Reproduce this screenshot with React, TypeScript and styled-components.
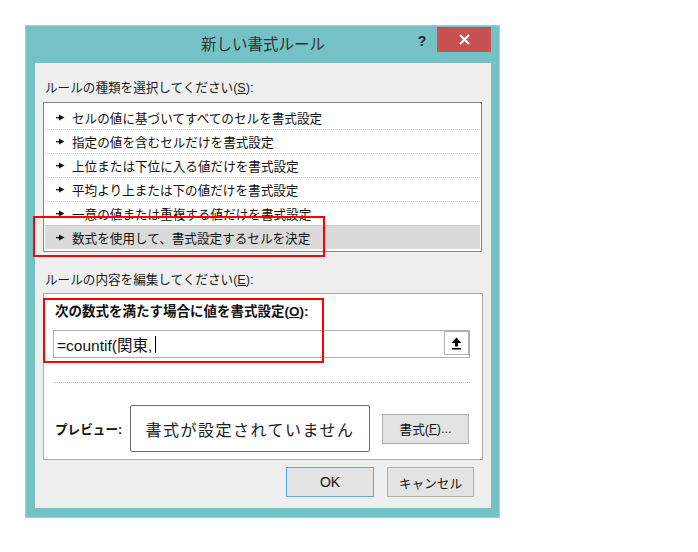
import styled, { createGlobalStyle } from 'styled-components';

const GlobalStyle = createGlobalStyle`
  body {
    margin: 0;
    background: #ffffff;
    font-family: "Liberation Sans", "Noto Sans CJK JP", sans-serif;
    color: #1b1b1b;
  }
`;

const Page = styled.div`
  position: relative;
  width: 698px;
  height: 552px;
  overflow: hidden;
  background: #ffffff;
`;

const Dialog = styled.div`
  margin: 25px 0 0 25px;
  width: 475px;
  box-sizing: border-box;
  border: 1px solid #c4c4c4;
  background: #74c2c6;
  padding: 0 8px 9px 9px;
`;

const TitleBar = styled.div`
  height: 37px;
  display: grid;
  grid-template-columns: 1fr auto 1fr;
  align-items: start;
`;

const Title = styled.div`
  grid-column: 2;
  padding-top: 9px;
  font-size: 15.5px;
  line-height: 20px;
  color: #333333;
`;

const Controls = styled.div`
  grid-column: 3;
  display: flex;
  justify-content: flex-end;
  align-items: flex-start;
  padding-top: 1px;
`;

const HelpMark = styled.div`
  width: 30px;
  padding-top: 6px;
  text-align: center;
  font-size: 14px;
  font-weight: bold;
  color: #222222;
  line-height: 16px;
`;

const CloseButton = styled.div`
  width: 54px;
  height: 25px;
  background: #c75050;
  display: flex;
  align-items: center;
  justify-content: center;
`;

const Content = styled.div`
  background: #efefef;
  height: 445px;
  box-sizing: border-box;
  padding: 17px 0 11px 0;
  display: flex;
  flex-direction: column;
`;

const SectionLabel = styled.div<{ $top?: number }>`
  margin: ${(p) => p.$top ?? 0}px 0 0 10px;
  font-size: 12.6px;
  line-height: 16px;
  color: #1e1e1e;
`;

const RuleList = styled.div`
  margin: 6px 0 0 8px;
  width: 439px;
  height: 150px;
  box-sizing: border-box;
  border: 1px solid #828790;
  background: #ffffff;
  padding: 2px 1px;
`;

const RuleRow = styled.div<{ $selected?: boolean }>`
  height: 24px;
  box-sizing: border-box;
  display: flex;
  align-items: center;
  padding-left: 11px;
  gap: 7px;
  font-size: 12.6px;
  color: #111111;
  background: ${(p) => (p.$selected ? '#dadada' : 'transparent')};
  & + & {
    border-top: 1px dotted #c9c9c9;
  }
`;

const EditPanel = styled.div`
  margin: 5px 0 0 8px;
  width: 440px;
  height: 167px;
  box-sizing: border-box;
  border: 1px solid #a8a8a8;
  background: #ffffff;
  padding-top: 9px;
  display: flex;
  flex-direction: column;
`;

const BoldLabel = styled.div`
  margin-left: 11px;
  font-size: 13.5px;
  font-weight: bold;
  line-height: 18px;
  color: #111111;
`;

const FormulaBox = styled.div`
  margin: 9px 0 0 9px;
  width: 417px;
  height: 28px;
  box-sizing: border-box;
  border: 1px solid #b0b0b0;
  display: flex;
  align-items: center;
`;

const FormulaText = styled.div`
  flex: 1;
  padding-left: 3px;
  font-size: 15.5px;
  color: #111111;
  display: flex;
  align-items: center;
`;

const Caret = styled.span`
  display: inline-block;
  width: 1px;
  height: 17px;
  background: #000000;
  margin-left: 3px;
`;

const CollapseButton = styled.div`
  width: 25px;
  height: 24px;
  box-sizing: border-box;
  border: 1px solid #b0b0b0;
  display: flex;
  align-items: center;
  justify-content: center;
  align-self: flex-start;
`;

const Divider = styled.div`
  margin: 24px 0 0 9px;
  width: 417px;
  border-top: 1px dotted #b8b8b8;
`;

const PreviewRow = styled.div`
  margin-top: 22px;
  padding-left: 11px;
  display: flex;
  align-items: center;
`;

const PreviewLabel = styled.div`
  width: 75px;
  font-size: 12.6px;
  font-weight: bold;
  color: #111111;
`;

const PreviewBox = styled.div`
  width: 240px;
  height: 47px;
  box-sizing: border-box;
  border: 1px solid #6f6f6f;
  border-radius: 2px;
  display: flex;
  align-items: center;
  justify-content: center;
  font-size: 16px;
  letter-spacing: 1.5px;
  color: #222222;
`;

const Button = styled.div<{ $primary?: boolean; $w: number }>`
  width: ${(p) => p.$w}px;
  height: 30px;
  box-sizing: border-box;
  border: 1px solid ${(p) => (p.$primary ? '#5fa4e0' : '#adadad')};
  background: #e3e3e3;
  display: flex;
  align-items: center;
  justify-content: center;
  font-size: 12.6px;
  color: #111111;
`;

const PreviewButton = styled(Button)`
  margin-left: 12px;
`;

const ButtonRow = styled.div`
  margin-top: 7px;
  padding-right: 17px;
  display: flex;
  justify-content: flex-end;
  gap: 13px;
`;

const OkText = styled.span`
  font-size: 14px;
`;

const Callout = styled.div<{ $x: number; $y: number; $w: number; $h: number }>`
  position: absolute;
  left: ${(p) => p.$x}px;
  top: ${(p) => p.$y}px;
  width: ${(p) => p.$w}px;
  height: ${(p) => p.$h}px;
  box-sizing: border-box;
  border: 2px solid #ff0000;
  pointer-events: none;
`;

const rules = [
  'セルの値に基づいてすべてのセルを書式設定',
  '指定の値を含むセルだけを書式設定',
  '上位または下位に入る値だけを書式設定',
  '平均より上または下の値だけを書式設定',
  '一意の値または重複する値だけを書式設定',
  '数式を使用して、書式設定するセルを決定',
];

function Bullet() {
  return (
    <svg width="9" height="7" viewBox="0 0 9 7">
      <rect x="0" y="2.9" width="4" height="1.4" fill="#111" />
      <path d="M3 0.5 L8.5 3.5 L3 6.5 Z" fill="#111" />
    </svg>
  );
}

function UploadIcon() {
  return (
    <svg width="11" height="13" viewBox="0 0 11 13">
      <path d="M5.5 0.5 L10.5 6 L7 6 L7 9.5 L4 9.5 L4 6 L0.5 6 Z" fill="#000" />
      <rect x="1" y="11" width="9" height="1.5" fill="#000" />
    </svg>
  );
}

function CloseIcon() {
  return (
    <svg width="11" height="11" viewBox="0 0 11 11">
      <path d="M1 1 L10 10 M10 1 L1 10" stroke="#fff" strokeWidth="2.2" />
    </svg>
  );
}

export default function App() {
  return (
    <Page>
      <GlobalStyle />
      <Dialog>
        <TitleBar>
          <Title>新しい書式ルール</Title>
          <Controls>
            <HelpMark>?</HelpMark>
            <CloseButton>
              <CloseIcon />
            </CloseButton>
          </Controls>
        </TitleBar>
        <Content>
          <SectionLabel>
            ルールの種類を選択してください(<u>S</u>):
          </SectionLabel>
          <RuleList>
            {rules.map((r, i) => (
              <RuleRow key={r} $selected={i === rules.length - 1}>
                <Bullet />
                <span>{r}</span>
              </RuleRow>
            ))}
          </RuleList>
          <SectionLabel $top={20}>
            ルールの内容を編集してください(<u>E</u>):
          </SectionLabel>
          <EditPanel>
            <BoldLabel>
              次の数式を満たす場合に値を書式設定(<u>O</u>):
            </BoldLabel>
            <FormulaBox>
              <FormulaText>
                =countif(関東,
                <Caret />
              </FormulaText>
              <CollapseButton>
                <UploadIcon />
              </CollapseButton>
            </FormulaBox>
            <Divider />
            <PreviewRow>
              <PreviewLabel>プレビュー:</PreviewLabel>
              <PreviewBox>書式が設定されていません</PreviewBox>
              <PreviewButton $w={87}>
                書式(<u>F</u>)...
              </PreviewButton>
            </PreviewRow>
          </EditPanel>
          <ButtonRow>
            <Button $primary $w={88}>
              <OkText>OK</OkText>
            </Button>
            <Button $w={87}>キャンセル</Button>
          </ButtonRow>
        </Content>
      </Dialog>
      <Callout $x={33} $y={216} $w={292} $h={41} />
      <Callout $x={43} $y={298} $w={281} $h={65} />
    </Page>
  );
}
